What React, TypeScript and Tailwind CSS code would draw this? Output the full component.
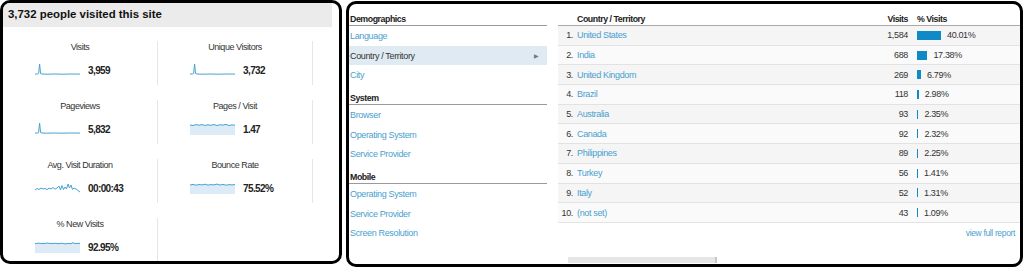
import React from "react";

const LINE = "#4aa2d0";
const FILL = "#dcebf6";

function Spark({ kind }: { kind: string }) {
  let line = "";
  let fill = false;
  if (kind === "spike") {
    line = "M0 11 L2.5 11 L3.6 10.5 L4.6 1 L5.6 10.6 L7 11 L12 11.2 L20 11 L28 11.2 L36 11 L45 11.1";
  } else if (kind === "flat") {
    line = "M0 3 L3 3.5 L6 2.6 L9 3.2 L12 2.6 L15 3.4 L18 2.8 L21 3.3 L24 2.5 L27 3.6 L30 2.7 L33 3.1 L36 2.4 L39 3.5 L42 2.9 L45 3.2";
    fill = true;
  } else if (kind === "bounce") {
    line = "M0 4 L3 3.4 L6 4.2 L9 3.5 L12 3.9 L15 3.2 L18 4.1 L21 3.6 L24 3.9 L27 3.1 L30 4 L33 3.4 L36 4.2 L39 3.6 L42 3.9 L45 3.5";
    fill = true;
  } else if (kind === "newv") {
    line = "M0 3.5 L4 3.2 L8 3.6 L12 3.1 L16 3.5 L20 3.3 L24 3.7 L27 3.2 L30 3.9 L33 3.4 L36 3.8 L38 2.6 L40 3.6 L43 3.3 L45 3.5";
    fill = true;
  } else {
    line = "M0 9 L2 7.5 L4 8.5 L6 7 L8 8 L10 7.5 L12 8.6 L14 7.2 L16 8 L18 6.5 L20 8.2 L22 7 L24 5 L25.5 9 L27 4.5 L28.5 8.5 L30 6 L31.5 8 L33 3 L34.5 7 L36 4 L37.5 8.5 L39 7 L41 8 L43 9.5 L45 11";
  }
  return (
    <svg width="45" height="14" viewBox="0 0 45 14" className="shrink-0">
      {fill && <path d={line + " L45 13 L0 13 Z"} fill={FILL} />}
      <path d={line} fill="none" stroke={LINE} strokeWidth="1" strokeLinejoin="round" />
    </svg>
  );
}

const metrics = [
  { label: "Visits", value: "3,959", kind: "spike" },
  { label: "Unique Visitors", value: "3,732", kind: "spike" },
  { label: "Pageviews", value: "5,832", kind: "spike" },
  { label: "Pages / Visit", value: "1.47", kind: "flat" },
  { label: "Avg. Visit Duration", value: "00:00:43", kind: "jag" },
  { label: "Bounce Rate", value: "75.52%", kind: "bounce" },
  { label: "% New Visits", value: "92.95%", kind: "newv" },
];

const rows = [
  ["United States", "1,584", 40.01],
  ["India", "688", 17.38],
  ["United Kingdom", "269", 6.79],
  ["Brazil", "118", 2.98],
  ["Australia", "93", 2.35],
  ["Canada", "92", 2.32],
  ["Philippines", "89", 2.25],
  ["Turkey", "56", 1.41],
  ["Italy", "52", 1.31],
  ["(not set)", "43", 1.09],
] as const;

const font = { fontFamily: '"Liberation Sans", Arial, sans-serif' };

function SideHeader({ text, first }: { text: string; first?: boolean }) {
  return (
    <div
      className={`${first ? "h-[22px]" : "h-[20px]"} flex items-end border-b border-[#9a9a9a] pl-[1px] font-bold text-[8.8px] tracking-[-0.45px] leading-[12px] text-[#222]`}
    >
      {text}
    </div>
  );
}

function SideItem({ text, active }: { text: string; active?: boolean }) {
  return (
    <div
      className={`h-[19.7px] flex items-center justify-between pl-[1px] pr-[8px] text-[9px] tracking-[-0.35px] leading-[12px] ${
        active ? "bg-[#dfeaf2] text-[#333]" : "text-[#4a9fcf]"
      }`}
    >
      <span>{text}</span>
      {active && <span className="text-[6px] text-[#777]">▶</span>}
    </div>
  );
}

export default function App() {
  return (
    <div className="w-[1024px] h-[269px] bg-white flex items-start gap-[4px]" style={font}>
      {/* Left panel */}
      <div className="w-[342px] h-[264px] border-[3px] border-black rounded-[10px] bg-white overflow-hidden shrink-0">
        <div className="h-[24px] mr-[7px] bg-[#ebebeb] flex items-center pl-[5px] text-[11.4px] font-bold text-[#111]">
          3,732 people visited this site
        </div>
        <div className="mt-[14px] grid grid-cols-[155px_155px] gap-y-[15px]">
          {metrics.map((m) => (
            <div key={m.label} className="h-[44px] border-r border-[#e6e6e6] flex flex-col">
              <div className="text-center text-[9px] tracking-[-0.45px] leading-[13px] text-[#333]">{m.label}</div>
              <div className="mt-[8px] pl-[32px] flex items-center gap-[8px] h-[16px]">
                <Spark kind={m.kind} />
                <span className="text-[10px] tracking-[-0.6px] font-bold text-[#222]">{m.value}</span>
              </div>
            </div>
          ))}
          <div className="h-[44px]" />
        </div>
      </div>

      {/* Right panel */}
      <div className="mt-[1px] w-[677px] h-[266px] border-[3px] border-black rounded-[10px] bg-white overflow-hidden flex relative">
        <div className="w-[198px] shrink-0">
          <SideHeader text="Demographics" first />
          <SideItem text="Language" />
          <SideItem text="Country / Territory" active />
          <SideItem text="City" />
          <SideHeader text="System" />
          <SideItem text="Browser" />
          <SideItem text="Operating System" />
          <SideItem text="Service Provider" />
          <SideHeader text="Mobile" />
          <SideItem text="Operating System" />
          <SideItem text="Service Provider" />
          <SideItem text="Screen Resolution" />
        </div>

        <div className="ml-[11px] flex-1 flex flex-col">
          <div className="h-[22px] flex items-end border-b border-[#aaaaaa] text-[8.8px] tracking-[-0.45px] leading-[12px] font-bold text-[#222]">
            <div className="w-[15px]" />
            <div className="flex-1 pl-[4px]">Country / Territory</div>
            <div className="w-[60px] text-right">Visits</div>
            <div className="w-[112px] pl-[9px]">% Visits</div>
          </div>
          {rows.map(([name, visits, pct], i) => (
            <div
              key={name}
              className={`h-[19.7px] flex items-center border-b border-[#e2e2e2] text-[9px] tracking-[-0.35px] leading-[12px] ${
                i % 2 === 0 ? "bg-[#f5f5f5]" : "bg-[#fafafa]"
              }`}
            >
              <div className="w-[15px] text-right text-[#333]">{i + 1}.</div>
              <div className="flex-1 pl-[4px] text-[#4a9fcf]">{name}</div>
              <div className="w-[60px] text-right text-[#333]">{visits}</div>
              <div className="w-[112px] pl-[9px] flex items-center gap-[6px] text-[#333]">
                <div
                  className="h-[9px] bg-[#0f8ac6]"
                  style={{ width: `${Math.max(1, (pct / 40.01) * 24)}px` }}
                />
                <span>{pct.toFixed(2)}%</span>
              </div>
            </div>
          ))}
          <div className="mt-[4px] pr-[5px] text-right text-[8.5px] tracking-[-0.35px] leading-[13px] text-[#4a9fcf]">
            view full report
          </div>
          <div className="mt-[17px] ml-[10px] w-[149px] h-[6px] bg-[#e6e6e6] border-r-[2px] border-[#c8c8c8]" />
        </div>
      </div>
    </div>
  );
}
